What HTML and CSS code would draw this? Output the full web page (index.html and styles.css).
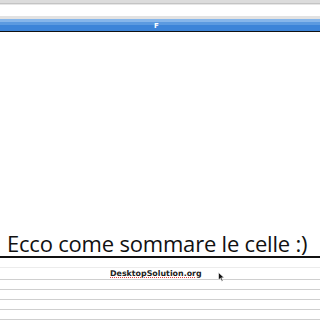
FILE: index.html
```html
<!DOCTYPE html>
<html lang="it">
<head>
  <meta charset="UTF-8" />
  <title>Ecco come sommare le celle</title>
  <link rel="stylesheet" href="styles.css">
</head>
<body>
  <!-- barra in alto -->
  <div class="toolbar">
    <div class="tb-top"></div>
    <div class="tb-line"></div>
    <div class="tb-field"></div>
    <div class="tb-bottom"></div>
  </div>

  <div class="titlebar">
    <span class="titlebar-letter">F</span>
  </div>

  <div class="canvas"></div>

  <div class="caption">
    <h1>Ecco come sommare le celle :)</h1>
  </div>

  <div class="sheet">
    <div class="row row-first"></div>
    <div class="row row-brand">
      <span class="brand">DesktopSolution.org</span>
      <svg class="cursor" width="7" height="10" viewBox="0 0 7 10">
        <path d="M0.5 0.5 L0.5 8 L2.4 6.3 L3.8 9.3 L5 8.8 L3.6 5.8 L6.2 5.8 Z" fill="#111" stroke="#fff" stroke-width="0.6"/>
      </svg>
    </div>
    <div class="row"></div>
    <div class="row"></div>
    <div class="row"></div>
    <div class="row"></div>
  </div>
</body>
</html>
```

FILE: styles.css
```css
body {
  margin: 0;
  width: 320px;
  height: 320px;
  overflow: hidden;
  background: #fff;
  font-family: "Open Sans", "DejaVu Sans", sans-serif;
  display: flex;
  flex-direction: column;
}

/* barra grigia */
.tb-top {
  height: 3px;
  background: #dcdcdc;
}

.tb-line {
  height: 1px;
  background: #c4c4c4;
}

.tb-field {
  height: 11px;
  background: #fff;
  border-top: 1px solid #e6e6e6;
}

.tb-bottom {
  height: 3px;
  background: #e2e2e2;
}

/* barra blu */
.titlebar {
  height: 12px;
  background: linear-gradient(#86b6ea 0, #86b6ea 3px, #5b9ae0 3px, #5b9ae0 6px, #3c84d8 6px);
  border-bottom: 1px solid #111;
  display: flex;
  justify-content: center;
  align-items: center;
}

.titlebar-letter {
  color: #fff;
  font-family: "DejaVu Sans", sans-serif;
  font-size: 7px;
  font-weight: bold;
  margin-right: 7px;
  margin-top: 2px;
}

.canvas {
  height: 198px;
}

.caption {
  height: 26px;
  border-bottom: 2px solid #111;
  display: flex;
  align-items: flex-end;
}

.caption h1 {
  margin: 0 0 0 7px;
  font-size: 22px;
  font-weight: normal;
  color: #111;
  line-height: 26px;
  letter-spacing: -0.2px;
}

.sheet {
  display: flex;
  flex-direction: column;
  padding-top: 9px;
}

.row {
  height: 9px;
  border-bottom: 1px solid #cfcfcf;
  flex-shrink: 0;
}

.row-first {
  height: 0;
  border-bottom-color: #ececec;
}

.row-brand {
  height: 11px;
  display: flex;
  align-items: center;
  padding-left: 110px;
  gap: 16px;
}

.brand {
  font-family: "DejaVu Sans", sans-serif;
  font-size: 7.9px;
  font-weight: bold;
  color: #222;
  text-decoration: underline dotted #e04040;
}

.cursor {
  margin-top: 6px;
}
```
